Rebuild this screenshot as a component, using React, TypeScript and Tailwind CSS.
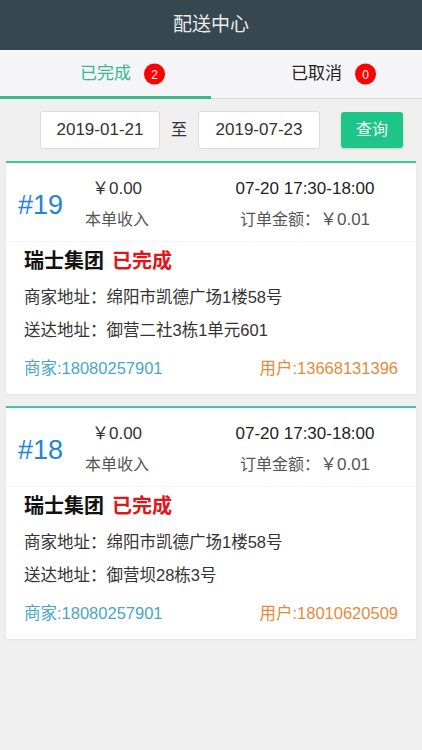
import React from "react";

interface Order {
  no: number;
  income: string;
  time: string;
  amount: string;
  shop: string;
  status: string;
  shopAddr: string;
  userAddr: string;
  shopPhone: string;
  userPhone: string;
}

const orders: Order[] = [
  {
    no: 19,
    income: "0.00",
    time: "07-20 17:30-18:00",
    amount: "0.01",
    shop: "瑞士集团",
    status: "已完成",
    shopAddr: "绵阳市凯德广场1楼58号",
    userAddr: "御营二社3栋1单元601",
    shopPhone: "18080257901",
    userPhone: "13668131396",
  },
  {
    no: 18,
    income: "0.00",
    time: "07-20 17:30-18:00",
    amount: "0.01",
    shop: "瑞士集团",
    status: "已完成",
    shopAddr: "绵阳市凯德广场1楼58号",
    userAddr: "御营坝28栋3号",
    shopPhone: "18080257901",
    userPhone: "18010620509",
  },
];

function Tab({ label, count, active }: { label: string; count: number; active?: boolean }) {
  return (
    <div className="relative flex-1 flex items-center justify-center h-full">
      <span className={`relative text-[17px] ${active ? "text-[#35b98f]" : "text-[#222]"}`}>
        {label}
        <span className="absolute left-[calc(100%+13px)] top-1/2 -translate-y-1/2 w-[21px] h-[21px] rounded-full bg-[#f00] text-white text-[12px] flex items-center justify-center">
          {count}
        </span>
      </span>
      {active && <div className="absolute left-0 right-0 bottom-[-1px] h-[3px] bg-[#35b98f]" />}
    </div>
  );
}

function OrderCard({ o }: { o: Order }) {
  return (
    <div className="mx-[6px] bg-white border-t-2 border-[#3cc79c] shadow-[0_1px_2px_rgba(0,0,0,0.06)]">
      <div className="h-[79px] pt-[4px] flex items-center border-b border-[#f6f6f6]">
        <div className="w-[74px] pl-[12px] pt-[2px] text-[27px] text-[#2185d6]">#{o.no}</div>
        <div className="w-[74px] text-center text-[16px]">
          <div className="h-[31px] leading-[31px] text-[#333] text-[17px]">￥{o.income}</div>
          <div className="h-[31px] leading-[31px] text-[#555]">本单收入</div>
        </div>
        <div className="flex-1 pl-[52px] pr-[12px] text-center text-[17px]">
          <div className="h-[31px] leading-[31px] text-[#222]">{o.time}</div>
          <div className="h-[31px] leading-[31px] text-[#555]">
            <span className="text-[16px]">订单金额：</span>￥{o.amount}
          </div>
        </div>
      </div>
      <div className="px-[18px] pb-[9px]">
        <div className="h-[38px] flex items-center text-[20px] font-bold">
          <span className="text-[#111]">{o.shop}</span>
          <span className="ml-[8px] text-[#e0161b]">{o.status}</span>
        </div>
        <div className="h-[34px] flex items-center text-[16.5px] text-[#333]">商家地址：{o.shopAddr}</div>
        <div className="h-[33px] flex items-center text-[16.5px] text-[#333]">送达地址：{o.userAddr}</div>
        <div className="h-[38px] pt-[4px] flex items-center justify-between text-[16.5px]">
          <span className="text-[#4aa6c8]">商家:{o.shopPhone}</span>
          <span className="text-[#e38b3c]">用户:{o.userPhone}</span>
        </div>
      </div>
    </div>
  );
}

export default function App() {
  return (
    <div
      className="min-h-screen bg-[#efeff0]"
      style={{ fontFamily: '"Liberation Sans", "Noto Sans CJK SC", sans-serif' }}
    >
      <div className="h-[50px] bg-[#36474f] flex items-center justify-center text-[19px] text-[#e9ecec]">
        配送中心
      </div>
      <div className="h-[49px] bg-[#f5f5f7] border-b border-[#d9d9d9] flex">
        <Tab label="已完成" count={2} active />
        <Tab label="已取消" count={0} />
      </div>
      <div className="flex items-center justify-end pr-[19px] pt-[12px] pb-[12px]">
        <div className="w-[120px] h-[38px] bg-white border border-[#dcdcdc] rounded-[3px] flex items-center justify-center text-[17px] text-[#333]">
          2019-01-21
        </div>
        <span className="mx-[11px] text-[16px] text-[#333]">至</span>
        <div className="w-[122px] h-[38px] bg-white border border-[#dcdcdc] rounded-[3px] flex items-center justify-center text-[17px] text-[#333]">
          2019-07-23
        </div>
        <div className="ml-[21px] w-[62px] h-[36px] bg-[#1ec589] rounded-[3px] shadow-[0_1px_2px_rgba(0,0,0,0.15)] flex items-center justify-center text-[16px] text-[#eafaf3]">
          查询
        </div>
      </div>
      <div className="flex flex-col gap-[12px]">
        {orders.map((o) => (
          <OrderCard key={o.no} o={o} />
        ))}
      </div>
    </div>
  );
}
